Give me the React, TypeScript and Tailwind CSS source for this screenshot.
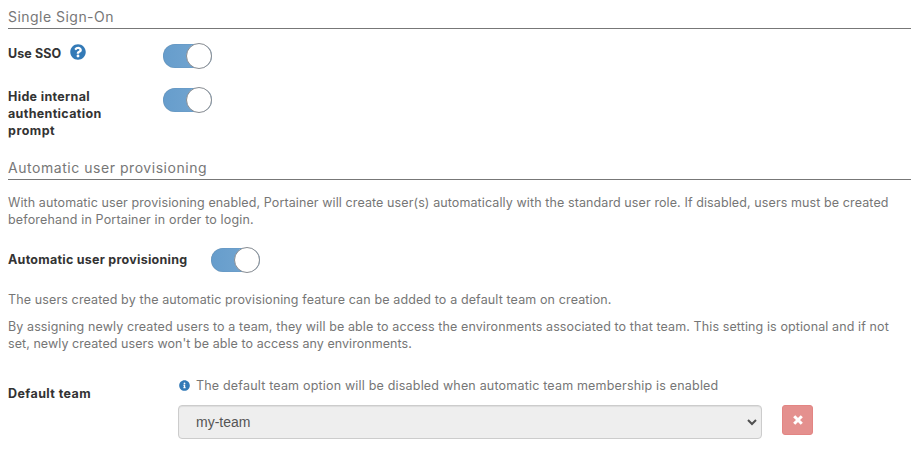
import React from "react";
import { FaInfoCircle, FaQuestionCircle } from "react-icons/fa";

function Heading({ children, className = "" }: { children: React.ReactNode; className?: string }) {
  return (
    <h2 className={`mr-[9px] ml-2 h-[22px] border-b border-[#777] text-[14px] leading-5 whitespace-nowrap text-[#777] ${className}`}>
      {children}
    </h2>
  );
}

function Toggle({ label }: { label: string }) {
  return (
    <button
      type="button"
      role="switch"
      aria-checked="true"
      aria-label={label}
      className="my-px flex h-6 w-[49px] shrink-0 items-center justify-end rounded-full bg-linear-to-r from-[#669dcc] to-[#76a7d1] shadow-[inset_0_0_1px_rgba(0,0,0,0.3)]"
    >
      <span className="h-[26px] w-[26px] shrink-0 rounded-full border border-[#888c91] bg-white" />
    </button>
  );
}

export default function App() {
  return (
    <main className="h-[451px] w-[920px] overflow-hidden bg-white font-['Inter',sans-serif] text-[12.5px] leading-[17px] text-[#767676]">
      <Heading className="mt-[7px] tracking-[0.47px]">Single Sign-On</Heading>

      <div className="mt-[14px] flex pl-2">
        <div className="flex w-[155px] pt-[2px] font-bold text-[#333]">
          <span className="w-[54px] tracking-[0.1px] whitespace-nowrap">Use SSO</span>
          <FaQuestionCircle className="-mt-px ml-[8px] h-4 w-4 text-[#337ab7]" />
        </div>
        <Toggle label="Use SSO" />
      </div>

      <div className="mt-[18px] flex pl-2">
        <div className="w-[155px] pt-px font-bold text-[#333]">
          <div className="tracking-[0.33px]">Hide internal</div>
          <div className="tracking-[0.34px]">authentication</div>
          <div className="tracking-[0.5px]">prompt</div>
        </div>
        <Toggle label="Hide internal authentication prompt" />
      </div>

      <Heading className="mt-[19px] tracking-[0.54px]">Automatic user provisioning</Heading>

      <div className="mt-[14px] pl-2 whitespace-nowrap">
        <div className="tracking-[0.103px]">With automatic user provisioning enabled, Portainer will create user(s) automatically with the standard user role. If disabled, users must be created</div>
        <div className="tracking-[0.16px]">beforehand in Portainer in order to login.</div>
      </div>

      <div className="mt-[19px] flex pl-2">
        <div className="w-[203px] pt-[4px] font-bold tracking-[0.26px] whitespace-nowrap text-[#333]">Automatic user provisioning</div>
        <Toggle label="Automatic user provisioning" />
      </div>

      <div className="mt-[18px] pl-2 whitespace-nowrap">
        <p className="tracking-[0.125px]">The users created by the automatic provisioning feature can be added to a default team on creation.</p>
        <p className="mt-[10px] tracking-[0.107px]">By assigning newly created users to a team, they will be able to access the environments associated to that team. This setting is optional and if not</p>
        <p className="tracking-[0.06px]">set, newly created users won't be able to access any environments.</p>
      </div>

      <div className="mt-[25px] flex pl-2">
        <div className="w-[170px] pt-2 font-bold tracking-[0.42px] text-[#333]">Default team</div>
        <div className="w-[584px]">
          <div className="flex items-center whitespace-nowrap">
            <FaInfoCircle className="mr-[6px] ml-px h-[11px] w-[11px] text-[#337ab7]" />
            <span className="tracking-[0.19px]">The default team option will be disabled when automatic team membership is enabled</span>
          </div>
          <div className="mt-[11px] flex h-[34px] items-center justify-between rounded-[4px] border border-[#ccc] bg-[#eee] pr-1 pl-[17px] shadow-[inset_0_1px_1px_rgba(0,0,0,0.075)]">
            <span className="font-['Liberation_Sans',sans-serif] text-[14px] text-[#555]">my-team</span>
            <svg width="10" height="7" viewBox="0 0 10 7" fill="none" stroke="#505050" strokeWidth="2">
              <path d="M1 1l4 4 4-4" />
            </svg>
          </div>
        </div>
        <button type="button" aria-label="Remove team" className="mt-[28px] ml-5 flex h-[30px] w-[31px] items-center justify-center rounded-[3px] border border-[#e38583] bg-[#e4908e] pb-px text-white">
          <svg width="10" height="10" viewBox="0 0 10 10" fill="none" stroke="currentColor" strokeWidth="3">
            <path d="M1.2 1.2l7.6 7.6M8.8 1.2L1.2 8.8" />
          </svg>
        </button>
      </div>
    </main>
  );
}
